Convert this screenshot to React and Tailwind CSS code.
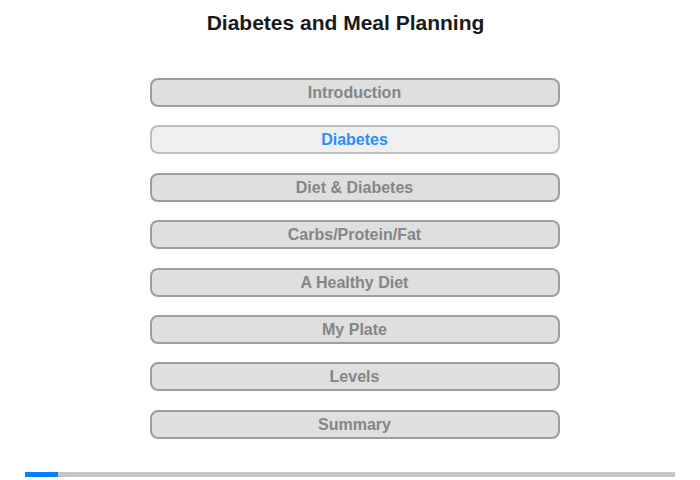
import React from 'react';

const sections = ['Introduction', 'Diabetes', 'Diet & Diabetes', 'Carbs/Protein/Fat', 'A Healthy Diet', 'My Plate', 'Levels', 'Summary'];

export default function App() {
  const active = 1;
  return (
    <div className="w-[700px] h-[480px] bg-white flex flex-col items-center font-['Liberation_Sans',Arial,sans-serif]">
      <h1 className="mt-[11px] mr-[9px] text-[21px] leading-[24px] font-bold text-[#1a1a1a]">Diabetes and Meal Planning</h1>
      <div className="mt-[43px] ml-[9px] flex flex-col gap-[18.4px]">
        {sections.map((s, i) => (
          <button
            key={s}
            className={
              i === active
                ? 'w-[410px] h-[29px] rounded-[8px] border-2 border-[#bdbdbd] bg-[#efefef] text-[16px] leading-[25px] font-bold text-[#2a8cff]'
                : 'w-[410px] h-[29px] rounded-[8px] border-2 border-[#9e9e9e] bg-[#dfdfdf] text-[16px] leading-[25px] font-bold text-[#858585]'
            }
          >
            {s}
          </button>
        ))}
      </div>
      <div className="mt-[33px] w-[650px] h-[5px] bg-[#c6c6c6] flex">
        <div className="w-[33px] h-full bg-[#0a7cff]" />
      </div>
    </div>
  );
}
